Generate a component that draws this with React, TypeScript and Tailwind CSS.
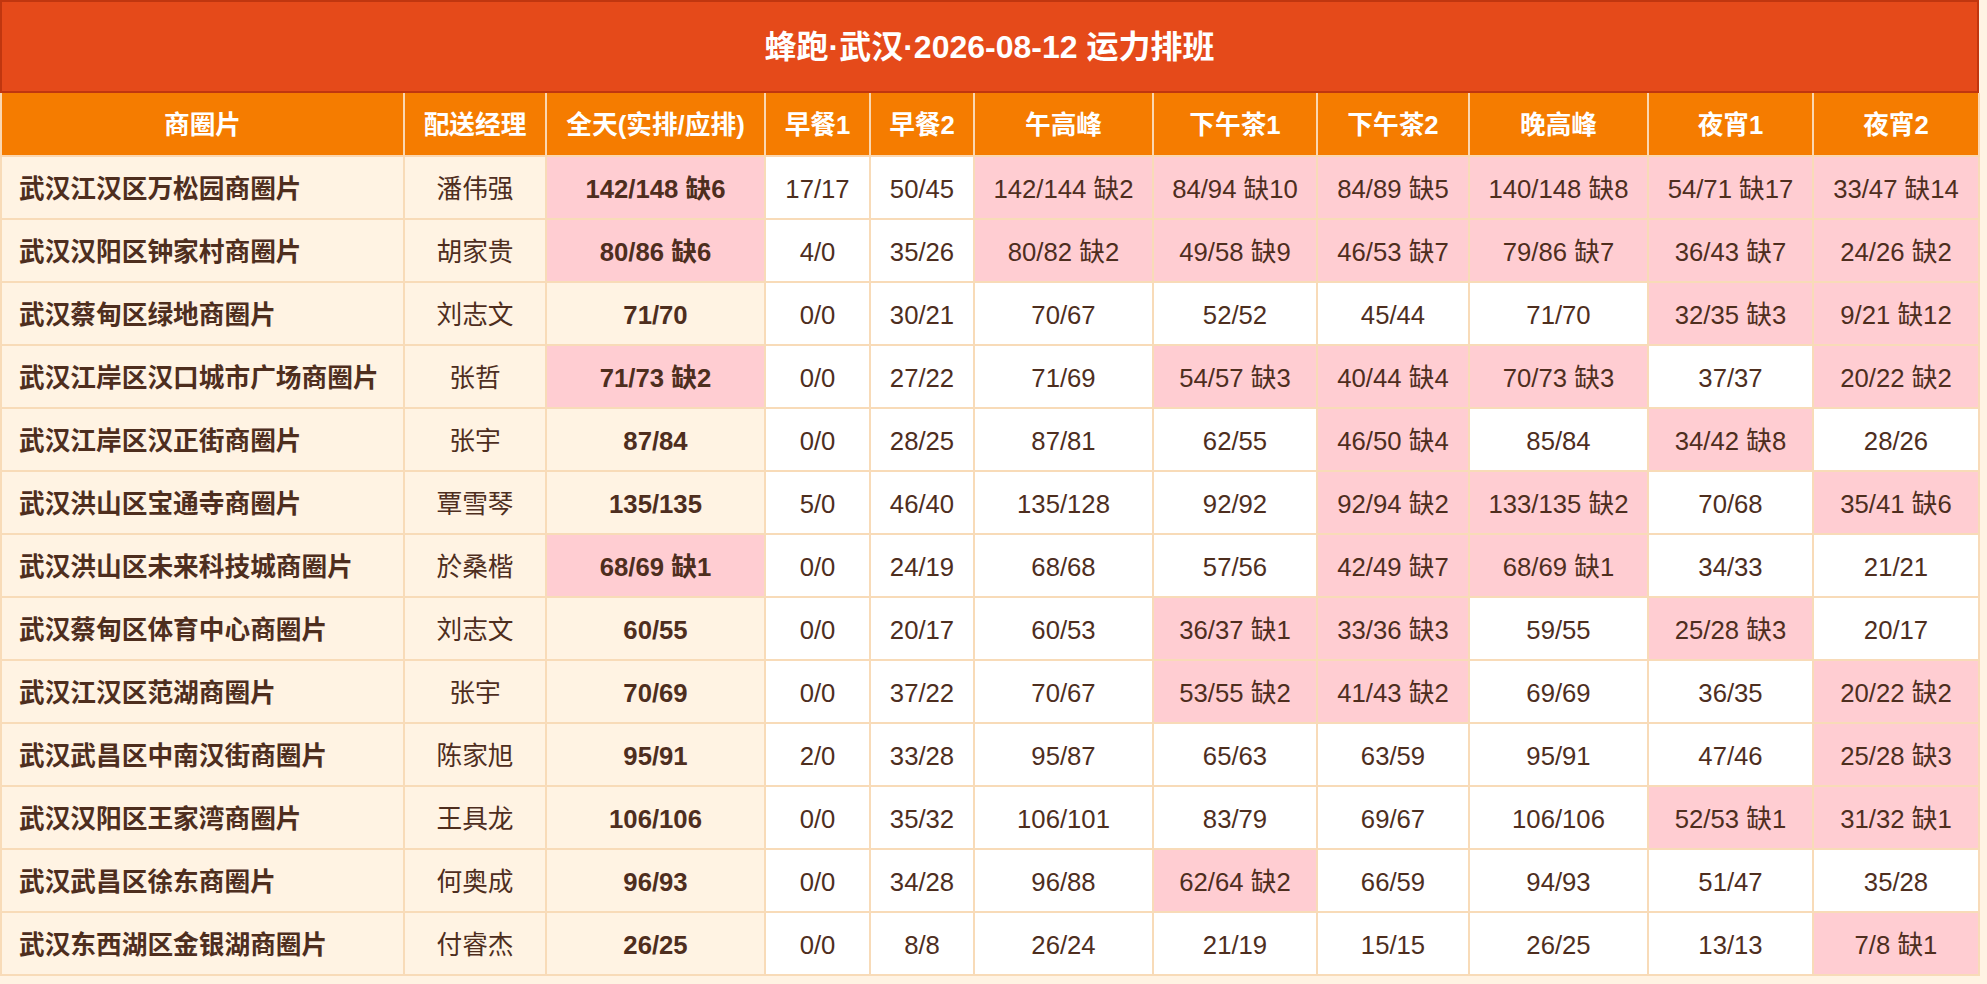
import React from "react";

const columns = [
  { label: "商圈片", width: "w-[403px]" },
  { label: "配送经理", width: "w-[142px]" },
  { label: "全天(实排/应排)", width: "w-[219px]" },
  { label: "早餐1", width: "w-[105px]" },
  { label: "早餐2", width: "w-[104px]" },
  { label: "午高峰", width: "w-[179px]" },
  { label: "下午茶1", width: "w-[164px]" },
  { label: "下午茶2", width: "w-[152px]" },
  { label: "晚高峰", width: "w-[179px]" },
  { label: "夜宵1", width: "w-[165px]" },
  { label: "夜宵2", width: "w-[166px]" },
];

// [商圈片, 经理, 全天, 早餐1, 早餐2, 午高峰, 下午茶1, 下午茶2, 晚高峰, 夜宵1, 夜宵2]
const rows: string[][] = [
  ["武汉江汉区万松园商圈片", "潘伟强", "142/148 缺6", "17/17", "50/45", "142/144 缺2", "84/94 缺10", "84/89 缺5", "140/148 缺8", "54/71 缺17", "33/47 缺14"],
  ["武汉汉阳区钟家村商圈片", "胡家贵", "80/86 缺6", "4/0", "35/26", "80/82 缺2", "49/58 缺9", "46/53 缺7", "79/86 缺7", "36/43 缺7", "24/26 缺2"],
  ["武汉蔡甸区绿地商圈片", "刘志文", "71/70", "0/0", "30/21", "70/67", "52/52", "45/44", "71/70", "32/35 缺3", "9/21 缺12"],
  ["武汉江岸区汉口城市广场商圈片", "张哲", "71/73 缺2", "0/0", "27/22", "71/69", "54/57 缺3", "40/44 缺4", "70/73 缺3", "37/37", "20/22 缺2"],
  ["武汉江岸区汉正街商圈片", "张宇", "87/84", "0/0", "28/25", "87/81", "62/55", "46/50 缺4", "85/84", "34/42 缺8", "28/26"],
  ["武汉洪山区宝通寺商圈片", "覃雪琴", "135/135", "5/0", "46/40", "135/128", "92/92", "92/94 缺2", "133/135 缺2", "70/68", "35/41 缺6"],
  ["武汉洪山区未来科技城商圈片", "於桑楷", "68/69 缺1", "0/0", "24/19", "68/68", "57/56", "42/49 缺7", "68/69 缺1", "34/33", "21/21"],
  ["武汉蔡甸区体育中心商圈片", "刘志文", "60/55", "0/0", "20/17", "60/53", "36/37 缺1", "33/36 缺3", "59/55", "25/28 缺3", "20/17"],
  ["武汉江汉区范湖商圈片", "张宇", "70/69", "0/0", "37/22", "70/67", "53/55 缺2", "41/43 缺2", "69/69", "36/35", "20/22 缺2"],
  ["武汉武昌区中南汉街商圈片", "陈家旭", "95/91", "2/0", "33/28", "95/87", "65/63", "63/59", "95/91", "47/46", "25/28 缺3"],
  ["武汉汉阳区王家湾商圈片", "王具龙", "106/106", "0/0", "35/32", "106/101", "83/79", "69/67", "106/106", "52/53 缺1", "31/32 缺1"],
  ["武汉武昌区徐东商圈片", "何奥成", "96/93", "0/0", "34/28", "96/88", "62/64 缺2", "66/59", "94/93", "51/47", "35/28"],
  ["武汉东西湖区金银湖商圈片", "付睿杰", "26/25", "0/0", "8/8", "26/24", "21/19", "15/15", "26/25", "13/13", "7/8 缺1"],
];

function cellClass(idx: number, value: string) {
  const short = value.includes("缺");
  if (idx === 0) return "bg-[#fff3e3] font-bold text-left pl-[17px]";
  if (idx === 1) return "bg-[#fff3e3] text-center";
  if (idx === 2) return `${short ? "bg-[#ffcdd2]" : "bg-[#fff3e3]"} font-bold text-center`;
  return `${short ? "bg-[#ffcdd2]" : "bg-white"} text-center`;
}

export default function App() {
  return (
    <div
      className="min-h-screen w-full bg-[#fff3e3] text-[#4e2e1e]"
      style={{ fontFamily: '"Liberation Sans", "Noto Sans CJK SC", sans-serif' }}
    >
      <div className="w-[1979px]">
        {/* Title */}
        <div className="h-[93px] bg-[#e54a1a] border-2 border-[#c0360f] flex items-center justify-center">
          <h1 className="text-[32px] font-bold text-white">
            蜂跑·武汉·2026-08-12 运力排班
          </h1>
        </div>

        {/* Schedule table */}
        <table className="w-[1979px] table-fixed border-collapse text-[25.7px]">
          <colgroup>
            {columns.map((c) => (
              <col key={c.label} className={c.width} />
            ))}
          </colgroup>
          <thead>
            <tr>
              {columns.map((c) => (
                <th
                  key={c.label}
                  className="h-[63px] pt-[3px] bg-[#f57c00] text-white font-bold text-center border-2 border-[#fbd7b0] border-t-0 whitespace-nowrap"
                >
                  {c.label}
                </th>
              ))}
            </tr>
          </thead>
          <tbody>
            {rows.map((row, r) => (
              <tr key={r}>
                {row.map((value, idx) => (
                  <td
                    key={idx}
                    className={`h-[63px] pt-[4px] border-2 border-[#f8dbb8] whitespace-nowrap ${cellClass(idx, value)}`}
                  >
                    {value}
                  </td>
                ))}
              </tr>
            ))}
          </tbody>
        </table>
      </div>
    </div>
  );
}
